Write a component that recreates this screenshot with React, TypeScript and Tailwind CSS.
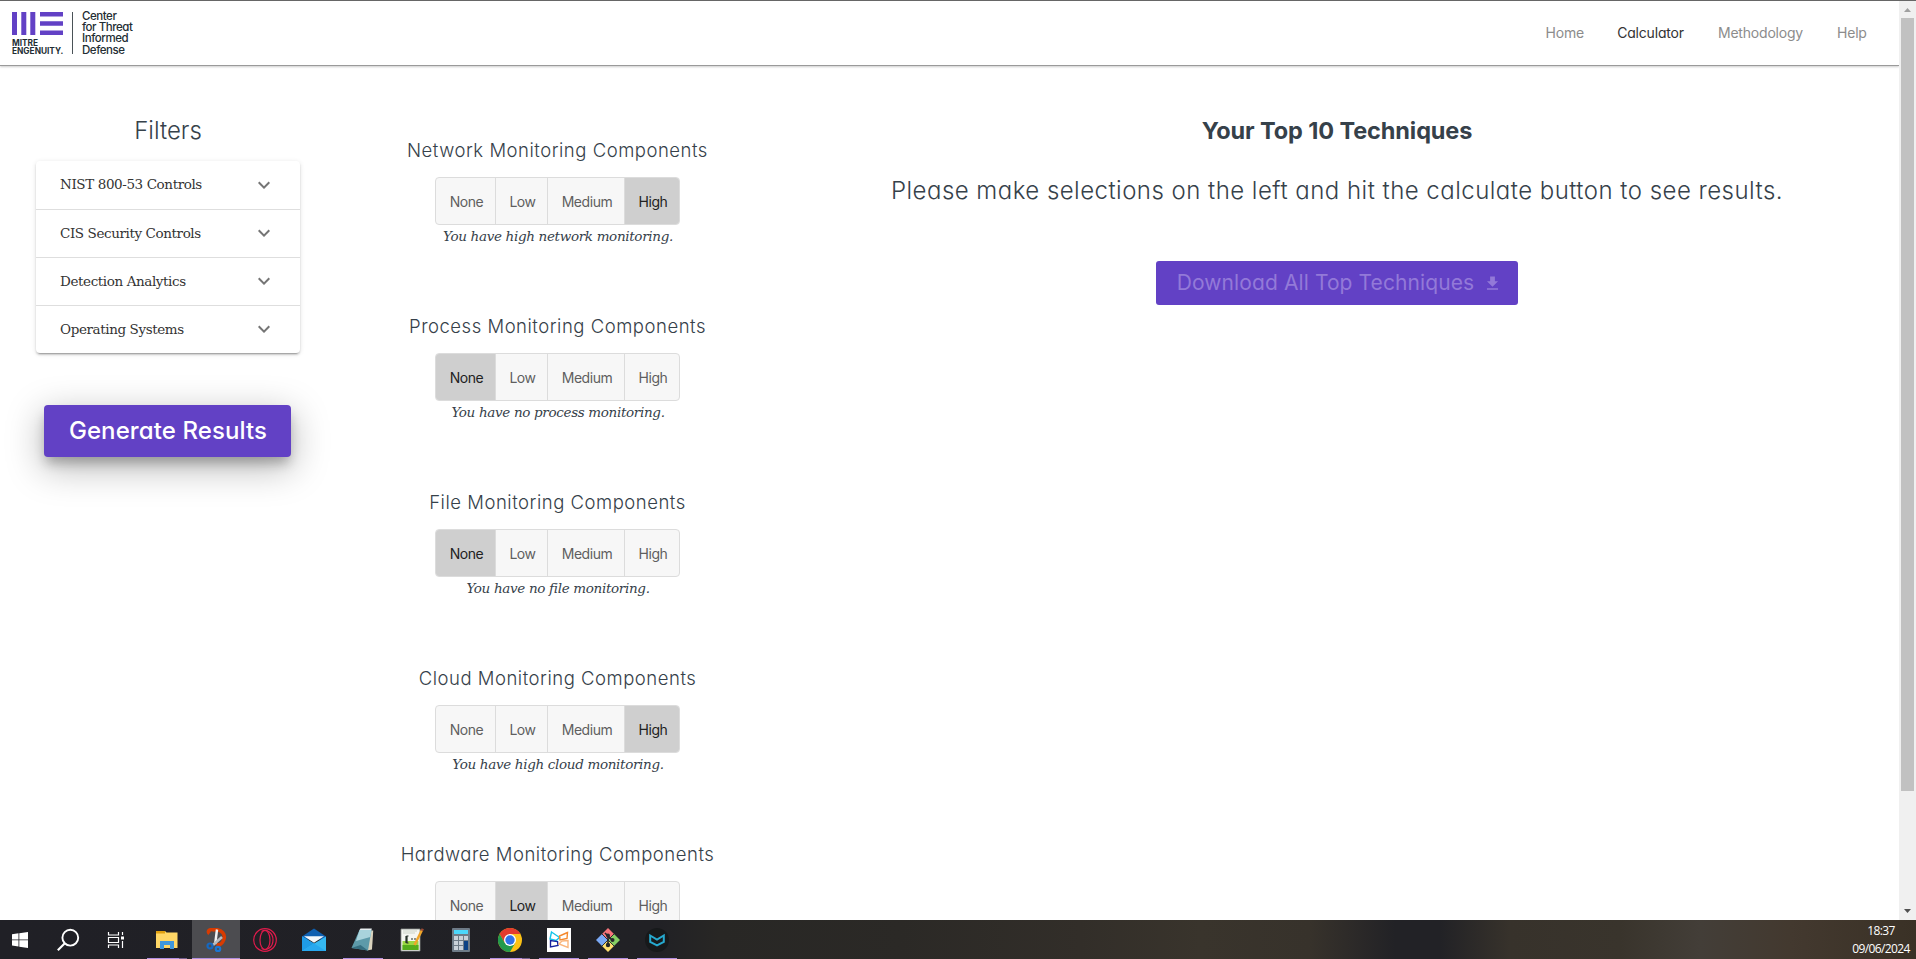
import type { ReactNode } from "react";
import { MdExpandMore } from "react-icons/md";

const NAV = [
  { label: "Home", width: "w-[38px]", active: false },
  { label: "Calculator", width: "w-[67px]", active: true },
  { label: "Methodology", width: "w-[86px]", active: false },
  { label: "Help", width: "w-[29px]", active: false },
];

const FILTERS = ["NIST 800-53 Controls", "CIS Security Controls", "Detection Analytics", "Operating Systems"];

const LEVELS = [
  { label: "None", width: "w-[59px]" },
  { label: "Low", width: "w-[52px]" },
  { label: "Medium", width: "w-[77px]" },
  { label: "High", width: "w-[55px]" },
];

const COMPONENTS = [
  { name: "Network", level: "High", note: "You have high network monitoring." },
  { name: "Process", level: "None", note: "You have no process monitoring." },
  { name: "File", level: "None", note: "You have no file monitoring." },
  { name: "Cloud", level: "High", note: "You have high cloud monitoring." },
  { name: "Hardware", level: "Low", note: "" },
];

function Logo() {
  return (
    <div className="flex h-[43px] text-[#232d33]">
      <div className="flex w-[60px] flex-col">
        <svg width="51" height="23" viewBox="0 0 51 23" fill="#6241c5">
          <path d="M0 0h5v23H0zM9.3 0h5v23h-5zM18.3 0h5v23h-5zM28 0h23v4.4H28zM28 9.3h23v4.4H28zM28 18.6h23V23H28z" />
        </svg>
        <div className="mt-[4px] text-[8.3px] leading-[8px] font-bold whitespace-nowrap">
          <div>MITRE</div>
          <div>ENGENUITY.</div>
        </div>
      </div>
      <div className="h-[42px] w-px bg-[#4a5257]" />
      <div className="-mt-px pl-[9px] text-[11.5px] leading-[11.2px] font-medium tracking-[-0.45px] whitespace-nowrap">
        <div>Center</div>
        <div>for Threat</div>
        <div>Informed</div>
        <div>Defense</div>
      </div>
    </div>
  );
}

function LevelToggle({ selected }: { selected: string }) {
  return (
    <div className="flex h-12 w-[245px] overflow-hidden rounded-[4px] border border-[#dcdcdc] bg-[#f7f7f7] text-[14px] tracking-[-0.45px]">
      {LEVELS.map((l, i) => (
        <button
          key={l.label}
          className={`flex items-center justify-center pl-[2px] ${l.width} ${i > 0 ? "border-l border-[#dcdcdc]" : ""} ${
            l.label === selected ? "bg-[#cfcfcf] text-[#222]" : "text-[#5f5f5f]"
          }`}
        >
          {l.label}
        </button>
      ))}
    </div>
  );
}

function Icon({ children }: { children: ReactNode }) {
  return (
    <svg width="24" height="24" viewBox="0 0 24 24" fill="none" className="block">
      {children}
    </svg>
  );
}

const APPS: { name: string; state: "none" | "open" | "multi" | "active"; icon: ReactNode }[] = [
  {
    name: "explorer",
    state: "multi",
    icon: (
      <>
        <path d="M1 3h9l1.500 1.500H22.500V20H1z" fill="#ffd766" />
        <path d="M1 3h9v2.500H1z" fill="#e0a010" />
        <path d="M5 21v-8h14v8h-4v-4H9v4z" fill="#3f97dc" />
      </>
    ),
  },
  {
    name: "snip",
    state: "active",
    icon: (
      <>
        <path d="M10.500 2C5 .5 3 3.500 5.500 5.500M10 1.800c8-1 12 5 9.500 10.500-.8 2.500-3.500 5-7 4.500" stroke="#d83b01" strokeWidth="3.600" />
        <path d="M13 1.500 11.200 16" stroke="#f2f2f2" strokeWidth="2.400" />
        <path d="M18 9 9 17" stroke="#b9bcc0" strokeWidth="2.600" />
        <circle cx="6" cy="18" r="2.500" stroke="#1668c0" strokeWidth="2.200" />
        <circle cx="14" cy="21" r="2.200" stroke="#1b76d2" strokeWidth="2.200" />
      </>
    ),
  },
  {
    name: "opera",
    state: "none",
    icon: (
      <g stroke="#e01b4c" strokeWidth="1.200">
        <circle cx="12" cy="12" r="11.300" />
        <ellipse cx="12" cy="12" rx="5" ry="9.500" />
        <path d="M8.500 3.500C13 .8 20 4 20 12s-7 11.200-11.500 8.500" />
      </g>
    ),
  },
  {
    name: "mail",
    state: "none",
    icon: (
      <>
        <path d="M0 8.500 12 .5l12 8v3H0z" fill="#0f5fb0" />
        <path d="M0 8.500V23h24V8.500L12 15.500z" fill="#35b8f1" />
        <path d="M0 8.500V23L12 15.500z" fill="#1f9be6" />
        <path d="m0 23 12-7.500L24 23z" fill="#28a8ee" />
        <path d="M2 8.200h20L12 14.800z" fill="#f4f7fa" />
      </>
    ),
  },
  {
    name: "notepad",
    state: "open",
    icon: (
      <>
        <path d="M19 2.500h3.200L21 21.500l-5 1z" fill="#d9d2bd" />
        <path d="M8.500 2h12l-3.500 20.500L.5 20z" fill="#5d9aa9" />
        <path d="M8.500 2h12l-1.200 7L5 13z" fill="#a9d3dc" />
        <path d="M8.500 2h12l.3-1.500H9.500z" fill="#e8eef0" />
        <path d="m.5 20 9-3 7.500 5.500z" fill="#366f81" />
      </>
    ),
  },
  {
    name: "editor",
    state: "none",
    icon: (
      <>
        <path d="M1 1h19v22H1z" fill="#f5f7f2" stroke="#8b918a" strokeWidth=".8" />
        <path d="M2.500 13h16v9h-16z" fill="#9bd743" />
        <path d="M2.500 17h16v5h-16z" fill="#55ac1c" />
        <path d="M3 3h14M3 5h12" stroke="#bcc4b8" strokeWidth=".7" />
        <path d="M6 8v7M8.500 8H7v7h1.500M11 11h2M14 11h2" stroke="#27332a" strokeWidth="1.200" />
        <path d="m22 2-7.500 15" stroke="#efa52a" strokeWidth="2.500" />
        <path d="m22.800.8-1 2" stroke="#9b4a35" strokeWidth="2.500" />
      </>
    ),
  },
  {
    name: "calculator",
    state: "none",
    icon: (
      <>
        <rect x="3" width="18" height="24" rx="1" fill="#6e7b87" />
        <path d="M5 2h14v4H5z" fill="#4cd7fb" />
        <path d="M5 8h4v4H5zM10 8h4v4h-4zM15 8h4v4h-4zM5 13h4v4H5zM10 13h4v4h-4zM5 18h4v4H5zM10 18h4v4h-4z" fill="#c9d1d9" />
        <path d="M15 13h4v9h-4z" fill="#0c4286" />
      </>
    ),
  },
  {
    name: "chrome",
    state: "multi",
    icon: (
      <>
        <circle cx="12" cy="12" r="12" fill="#fbc116" />
        <path d="M1.600 6A12 12 0 0 1 22.400 6H12L6.800 15z" fill="#e33b2e" />
        <path d="M1.600 6A12 12 0 0 0 12 24l5.200-9L12 12 6.800 15z" fill="#229a4c" />
        <circle cx="12" cy="12" r="6" fill="#fff" />
        <circle cx="12" cy="12" r="4.700" fill="#2f72e8" />
      </>
    ),
  },
  {
    name: "designer",
    state: "open",
    icon: (
      <>
        <path d="M0 0h24v24H0z" fill="#fff" />
        <path d="m4.500 4 8 5.500-3.500 3-6-1.500z" stroke="#12c5ea" strokeWidth="1.400" />
        <path d="M20.500 4.500 12.500 8l.5 4 7-1.500z" stroke="#f5892d" strokeWidth="1.400" />
        <path d="M3.500 12.500V19l7.500-1.500-.5-4z" stroke="#14209e" strokeWidth="1.400" />
        <path d="M21 12.500v7l-9-3.500 3-3z" stroke="#fab67c" strokeWidth="1.400" />
      </>
    ),
  },
  {
    name: "git",
    state: "open",
    icon: (
      <>
        <path d="m12 0 6 6-6 6-6-6z" fill="#f5747a" />
        <path d="m6 6 6 6-6 6-6-6z" fill="#7ba9f5" />
        <path d="m18 6 6 6-6 6-6-6z" fill="#86cf63" />
        <path d="m12 12 6 6-6 6-6-6z" fill="#ffe071" />
        <path d="m9 5 3 3v9M12 8l4 4" stroke="#25272a" strokeWidth="1.600" />
        <circle cx="12" cy="7.500" r="2" fill="#25272a" />
        <circle cx="16.500" cy="12" r="2" fill="#25272a" />
        <circle cx="12" cy="17" r="2.200" fill="#25272a" />
        <path d="m5.500 5.500 13 13M18.500 5.500l-13 13" stroke="#25272a" strokeWidth=".9" />
      </>
    ),
  },
  {
    name: "shield",
    state: "open",
    icon: (
      <>
        <circle cx="12" cy="12" r="12" fill="#17191b" />
        <path d="m5.200 7.500 6.800 4 6.800-4v6.500L12 17.500l-6.800-3.500z" stroke="#26a9cf" strokeWidth="2" />
      </>
    ),
  },
];

function Taskbar() {
  return (
    <footer className="flex h-[39px] shrink-0 justify-between bg-[linear-gradient(90deg,#202026_0px,#212125_660px,#282725_720px,#2b2926_900px,#322e29_1080px,#39342c_1200px,#37322b_1310px,#222226_1395px,#222226_1440px,#37322b_1510px,#39342c_1620px,#433e38_1700px,#43392f_1790px,#3a3126_1916px)]">
      <div className="flex">
        <div className="flex w-11 items-center pl-2">
          <Icon>
            <path d="m4 6.200 6.500-.9v6.200H4zM11.300 5.200 20 4v7.500h-8.700zM4 12.300h6.500v6.200L4 17.600zM11.300 12.300H20V20l-8.700-1.300z" fill="#fff" />
          </Icon>
        </div>
        <div className="flex w-12 items-center pl-3">
          <Icon>
            <circle cx="14.300" cy="9.700" r="7.900" stroke="#fff" strokeWidth="1.900" />
            <path d="m8.800 15.300-7 7" stroke="#fff" strokeWidth="2.100" />
          </Icon>
        </div>
        <div className="flex w-12 items-center pl-3">
          <Icon>
            <path d="M4.500 4v3h10V4M4.500 20v-3h10v3M4.500 9.500h10v5h-10z" stroke="#fff" strokeWidth="1.200" />
            <path d="M18.500 4v3M18.500 13v7" stroke="#fff" strokeWidth="1.200" />
            <path d="M17 8.500h3v3h-3z" fill="#fff" />
          </Icon>
        </div>
        <div className="ml-[3px] flex">
          {APPS.map((app) => (
            <div key={app.name} className="flex w-[49px] flex-col">
              <div
                className={`flex h-[38px] items-center pt-[2px] ${
                  app.state === "active" ? "w-12 bg-[#4c4c50] pl-3" : "w-full pl-3"
                }`}
              >
                <Icon>{app.icon}</Icon>
              </div>
              {app.state === "active" && <div className="h-px w-12 bg-[#b08fe0]" />}
              {app.state === "open" && <div className="ml-1 h-px w-10 bg-[#b08fe0]" />}
              {app.state === "multi" && (
                <div className="ml-1 flex h-px w-10">
                  <div className="w-8 bg-[#b08fe0]" />
                  <div className="w-2 bg-[#75618f]" />
                </div>
              )}
            </div>
          ))}
        </div>
      </div>
      <div className="mr-[5px] flex w-[60px] flex-col items-center pt-[2px] font-['Open_Sans',sans-serif] text-[12px] leading-[18px] tracking-[-0.6px] text-white">
        <div>18:37</div>
        <div>09/06/2024</div>
      </div>
    </footer>
  );
}

export default function App() {
  return (
    <div className="flex h-[959px] w-[1916px] flex-col overflow-hidden bg-white font-['Inter','Liberation_Sans',sans-serif] text-[#36414a] [font-feature-settings:'cv11']">
      <div className="h-px shrink-0 bg-[#666]" />
      <div className="flex h-[919px] shrink-0">
        <div className="flex w-[1899px] flex-col overflow-hidden">
          <header className="flex h-[65px] shrink-0 items-start justify-between border-b border-[#9a9a9a] pt-[11px] pr-[33px] pl-3 shadow-[0_1px_2px_rgba(0,0,0,0.2)]">
            <Logo />
            <nav className="mt-[11px] flex gap-[33.500px] text-[14px] leading-5 tracking-[-0.2px]">
              {NAV.map((n) => (
                <a key={n.label} className={`${n.width} text-center whitespace-nowrap ${n.active ? "text-[#333]" : "text-[#8c8c8c]"}`}>
                  {n.label}
                </a>
              ))}
            </nav>
          </header>

          <main className="flex">
            <section className="flex w-[336px] flex-col items-center pt-[49px]">
              <h2 className="text-[24px] leading-[32px] font-light">Filters</h2>
              <div className="mt-[14px] w-[264px] rounded-[4px] bg-white font-['DejaVu_Serif',serif] shadow-[0_3px_1px_-2px_rgba(0,0,0,0.2),0_2px_2px_0_rgba(0,0,0,0.14),0_1px_5px_0_rgba(0,0,0,0.12)]">
                {FILTERS.map((f, i) => (
                  <div
                    key={f}
                    className={`flex items-center justify-between pr-[24px] pb-px pl-6 text-[13.500px] tracking-[-0.4px] text-[#333] ${
                      i === 0 ? "h-[49px]" : i === FILTERS.length - 1 ? "h-[47px]" : "h-12"
                    } ${i < FILTERS.length - 1 ? "border-b border-[#dedede]" : ""}`}
                  >
                    {f}
                    <MdExpandMore className="size-6 text-[#757575]" />
                  </div>
                ))}
              </div>
              <button className="mt-[52px] mr-px h-[52px] w-[247px] rounded-[4px] bg-[#6241c5] pl-px text-[24px] font-medium tracking-[0.1px] text-white shadow-[0_8px_12px_-2px_rgba(0,0,0,0.25),0_10px_36px_2px_rgba(0,0,0,0.27)]">
                Generate Results
              </button>
            </section>

            <section className="flex w-[443px] flex-col items-center pt-[71px]">
              {COMPONENTS.map((c) => (
                <div key={c.name} className="flex h-[176px] flex-col items-center">
                  <h3 className="text-[18.500px] leading-[27px] font-light tracking-[0.52px] whitespace-nowrap">{c.name} Monitoring Components</h3>
                  <div className="mt-[13px]">
                    <LevelToggle selected={c.level} />
                  </div>
                  {c.note && (
                    <p className="mt-px pl-px font-['DejaVu_Serif',serif] text-[13.500px] leading-5 tracking-[-0.33px] italic">{c.note}</p>
                  )}
                </div>
              ))}
            </section>

            <section className="flex w-[1116px] flex-col items-center pt-[49px]">
              <h2 className="text-[23.500px] leading-[32px] font-bold tracking-[-0.1px]">Your Top 10 Techniques</h2>
              <p className="mt-[28px] text-[24px] leading-[32px] font-light tracking-[0.47px] whitespace-nowrap">
                Please make selections on the left and hit the calculate button to see results.
              </p>
              <button className="mt-[54px] flex h-[44px] w-[362px] items-center justify-center gap-[9px] rounded-[3px] bg-[#6241c5] pl-[5px] text-[21px] whitespace-nowrap text-[#9379d8]">
                <span className="tracking-[0.1px]">Download All Top Techniques</span>
                <svg width="19" height="19" viewBox="0 0 24 24" fill="currentColor">
                  <path d="M19 9h-4V3H9v6H5l7 7 7-7zM5 18v2h14v-2H5z" />
                </svg>
              </button>
            </section>
          </main>
        </div>

        <div className="flex w-[17px] flex-col items-center justify-between bg-[#f0f0f0] py-[7px]">
          <div className="flex flex-col items-center">
            <svg width="7" height="4" viewBox="0 0 7 4">
              <path d="M0 4 3.500 0 7 4z" fill="#a0a0a0" />
            </svg>
            <div className="mt-[6px] h-[773px] w-[13px] bg-[#c1c1c1]" />
          </div>
          <svg width="7" height="4" viewBox="0 0 7 4">
            <path d="M0 0h7L3.500 4z" fill="#505050" />
          </svg>
        </div>
      </div>
      <Taskbar />
    </div>
  );
}
